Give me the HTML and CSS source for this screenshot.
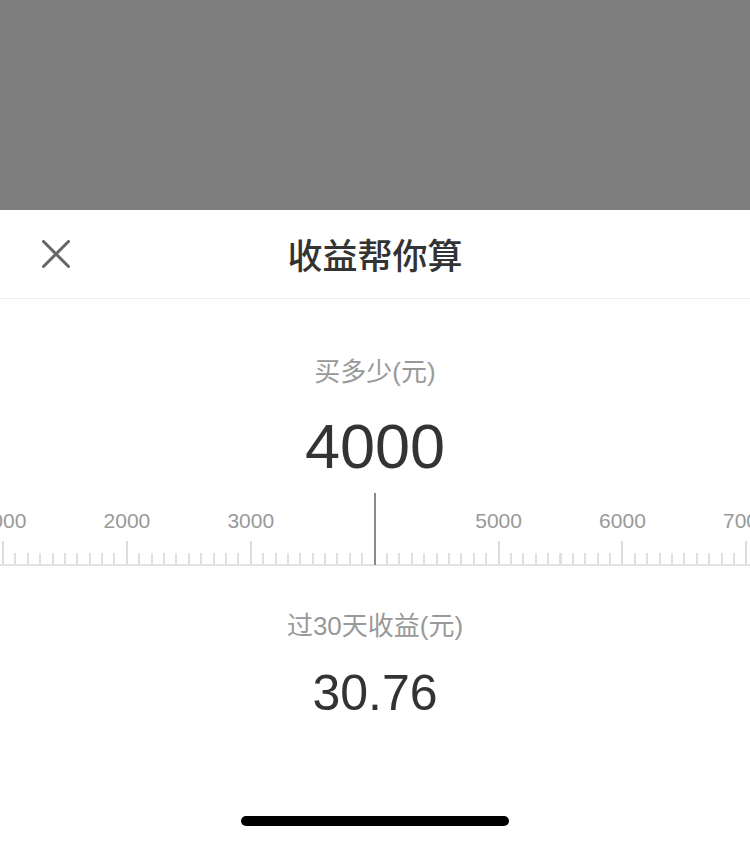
FILE: index.html
```html
<!DOCTYPE html>
<html lang="zh-CN">
<head>
<meta charset="utf-8">
<title>收益帮你算</title>
<link rel="stylesheet" href="styles.css">
</head>
<body>
<div class="mask"></div>
<div class="sheet">
  <header class="header">
    <div class="close">
      <svg width="28" height="28" viewBox="0 0 28 28"><path d="M1.5 1.5 L26.5 26.5 M26.5 1.5 L1.5 26.5" stroke="#666" stroke-width="3" stroke-linecap="round" fill="none"/></svg>
    </div>
    <h1 class="title">收益帮你算</h1>
    <div></div>
  </header>
  <div class="label label-buy">买多少(元)</div>
  <div class="amount">4000</div>
  <div class="ruler">
    <div class="scale">
      <div class="cell"><span class="num">1000</span><i class="major"></i></div>
      <div class="cell"><span class="num">2000</span><i class="major"></i></div>
      <div class="cell"><span class="num">3000</span><i class="major"></i></div>
      <div class="cell"><span class="num"></span><i class="major"></i></div>
      <div class="cell"><span class="num">5000</span><i class="major"></i></div>
      <div class="cell"><span class="num">6000</span><i class="major"></i></div>
      <div class="cell"><span class="num">7000</span><i class="major"></i></div>
    </div>
    <div class="pointer"></div>
  </div>
  <div class="label label-earn">过30天收益(元)</div>
  <div class="earn">30.76</div>
  <div class="home-bar"></div>
</div>
</body>
</html>
```

FILE: styles.css
```css
* { box-sizing: border-box; }
html, body {
  margin: 0;
  padding: 0;
}
body {
  width: 750px;
  height: 844px;
  overflow: hidden;
  background: #fff;
  font-family: "Liberation Sans", "Noto Sans CJK SC", sans-serif;
}
.mask {
  height: 210px;
  background: #7f7f7f;
}
.sheet {
  display: flex;
  flex-direction: column;
  align-items: stretch;
}
.header {
  height: 89px;
  border-bottom: 1px solid #ececec;
  display: grid;
  grid-template-columns: 1fr auto 1fr;
  align-items: center;
}
.close {
  padding-left: 42px;
  display: flex;
  align-items: center;
  height: 28px;
}
.close svg { display: block; }
.title {
  margin: 0;
  font-family: "Noto Sans CJK SC", sans-serif;
  font-size: 35px;
  font-weight: 500;
  color: #333;
  line-height: 48px;
}
.label {
  text-align: center;
  font-size: 26px;
  line-height: 36px;
  color: #999;
}
.label-buy { margin-top: 55px; }
.amount {
  margin-top: 21px;
  text-align: center;
  font-size: 63px;
  line-height: 70px;
  color: #333;
}
.ruler {
  position: relative;
  margin-top: 12px;
  height: 73px;
  overflow: hidden;
}
.scale {
  display: flex;
  width: 867.3px;
  margin-left: -58.95px;
  padding-top: 16px;
  border-bottom: 2px solid #e2e2e2;
  background-image: repeating-linear-gradient(to right, #e0e0e0 0, #e0e0e0 2px, transparent 2px, transparent 12.39px);
  background-size: 100% 11px;
  background-repeat: no-repeat;
  background-position: -1px bottom;
}
.cell {
  flex: 0 0 123.9px;
  display: flex;
  flex-direction: column;
  align-items: center;
}
.num {
  height: 24px;
  font-size: 21px;
  line-height: 24px;
  color: #999;
}
.major {
  display: block;
  margin-top: 8px;
  width: 2px;
  height: 23px;
  background: #dcdcdc;
}
.pointer {
  position: absolute;
  left: 374px;
  top: 0;
  width: 2px;
  height: 72px;
  background: #8a8a8a;
}
.label-earn { margin-top: 42px; }
.earn {
  margin-top: 19px;
  text-align: center;
  font-size: 50px;
  line-height: 60px;
  color: #333;
}
.home-bar {
  align-self: center;
  margin-top: 93px;
  width: 268px;
  height: 10px;
  border-radius: 5px;
  background: #000;
}
```
